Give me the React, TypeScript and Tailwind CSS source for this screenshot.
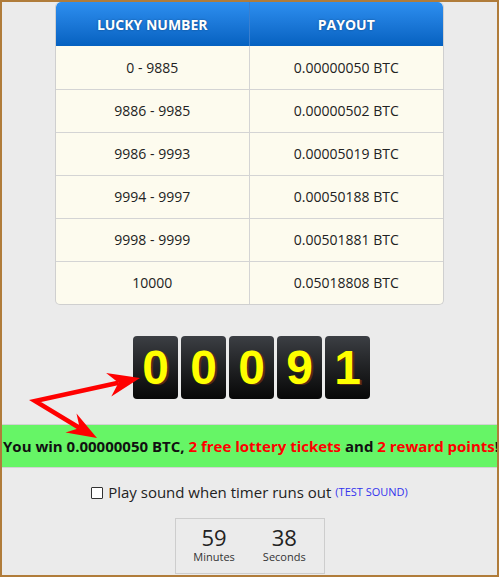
const rows = [
  ['0 - 9885', '0.00000050 BTC'],
  ['9886 - 9985', '0.00000502 BTC'],
  ['9986 - 9993', '0.00005019 BTC'],
  ['9994 - 9997', '0.00050188 BTC'],
  ['9998 - 9999', '0.00501881 BTC'],
  ['10000', '0.05018808 BTC'],
]

const digits = ['0', '0', '0', '9', '1']

const Arrows = () => (
  <svg className="absolute left-0 top-0 pointer-events-none" width="499" height="577" viewBox="0 0 499 577">
    <polyline points="116.5,380.7 33,399 77.7,426" fill="none" stroke="#ff0000" strokeWidth="4.5" strokeLinejoin="miter" />
    <polygon points="138,376 104.1,371.1 116.5,380.7 109.3,394.5" fill="#ff0000" />
    <polygon points="95,436 63.5,430.5 77.7,426 74.5,411.5" fill="#ff0000" />
  </svg>
)

export default function App() {
  return (
    <div
      className="relative w-[499px] h-[577px] overflow-hidden border-2 border-[#b07c3a] bg-[#ebebeb] text-[#222]"
      style={{ fontFamily: '"Open Sans", "Noto Sans", sans-serif' }}
    >
      <div className="flex flex-col items-center">
        <div className="w-[389px] rounded-[5px] border border-[#cfcfcf] border-t-0 overflow-hidden bg-[#fdfbee]">
          <div className="grid grid-cols-2 h-[44px] rounded-t-[5px] bg-gradient-to-b from-[#2d8ff0] to-[#0561c0] text-white font-bold text-[14px]">
            <div className="flex items-center justify-center border-r border-[#3a7fcf] [text-shadow:0_0_2px_rgba(0,0,0,0.4)]">LUCKY NUMBER</div>
            <div className="flex items-center justify-center [text-shadow:0_0_2px_rgba(0,0,0,0.4)]">PAYOUT</div>
          </div>
          {rows.map((r, i) => (
            <div key={i} className={`grid grid-cols-2 h-[43px] text-[14px] ${i > 0 ? 'border-t border-[#d4d4d4]' : ''}`}>
              <div className="flex items-center justify-center border-r border-[#d4d4d4] pb-[1px]">{r[0]}</div>
              <div className="flex items-center justify-center pb-[1px]">{r[1]}</div>
            </div>
          ))}
        </div>

        <div className="flex gap-[3px] mt-[31px] ml-[4px]">
          {digits.map((d, i) => (
            <div
              key={i}
              className="w-[45px] h-[63px] rounded-[4px] bg-gradient-to-b from-[#3c3f44] to-[#080808] flex items-center justify-center text-[#ffff00] font-bold text-[48px] leading-none [text-shadow:2px_1px_0_#5a2a10]"
              style={{ fontFamily: '"Liberation Sans", Arial, sans-serif' }}
            >
              {d}
            </div>
          ))}
        </div>

        <div className="w-full mt-[25px] h-[44px] border-y border-[#d2d2d2] bg-[#66f566] flex items-center justify-start pl-[1px] whitespace-nowrap font-bold text-[15px] text-[#111]">
          <span>
            You win 0.00000050 BTC, <span className="text-[#ff0000]">2 free lottery tickets</span> and{' '}
            <span className="text-[#ff0000]">2 reward points</span>!
          </span>
        </div>

        <div className="mt-[13px] flex items-center text-[15px] text-[#222]">
          <span className="w-[12px] h-[12px] border border-[#333] rounded-[1px] bg-white mr-[5px] mt-[1px]" />
          <span>Play sound when timer runs out</span>
          <span className="ml-[4px] text-[11px] text-[#3333ee]">(TEST SOUND)</span>
        </div>

        <div className="mt-[14px] w-[150px] h-[56px] border border-[#cdcdcd] flex justify-center gap-[28px] pt-[7px]">
          <div className="flex flex-col items-center">
            <span className="text-[22px] leading-[22px]">59</span>
            <span className="text-[11px] leading-[12px] mt-[3px] text-[#333]">Minutes</span>
          </div>
          <div className="flex flex-col items-center">
            <span className="text-[22px] leading-[22px]">38</span>
            <span className="text-[11px] leading-[12px] mt-[3px] text-[#333]">Seconds</span>
          </div>
        </div>
      </div>
      <Arrows />
    </div>
  )
}
